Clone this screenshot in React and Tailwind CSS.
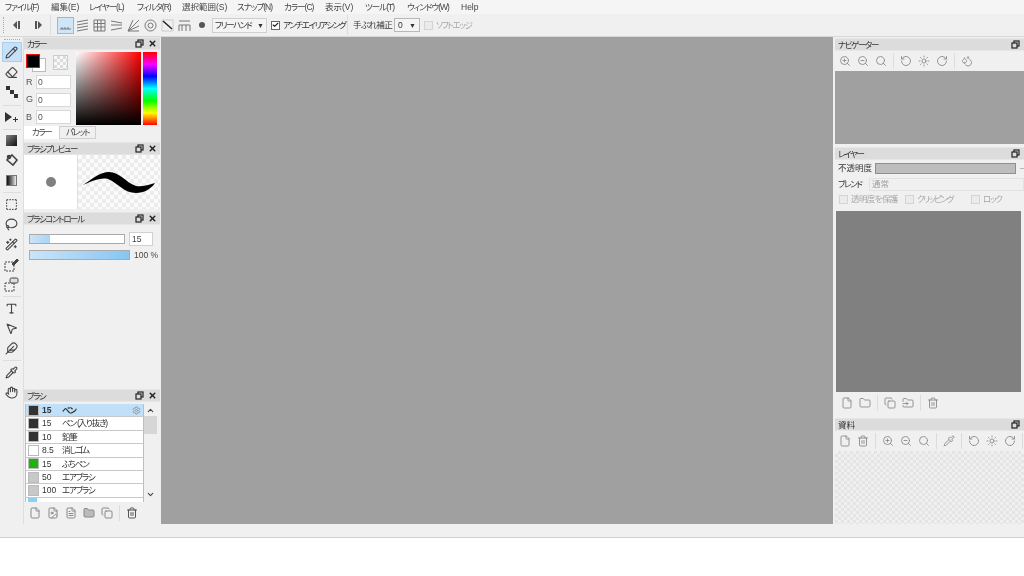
import { Pencil, Eraser, MousePointer2, Lasso, Wand2, Pipette, Hand, ZoomIn, ZoomOut, Search, RotateCcw, RotateCw, Trash2, File, Folder, Copy, Sun, Droplets, FileImage, FileText, FolderInput, Settings, ChevronUp, ChevronDown, Feather, SquareDashed, Check, X, Type } from 'lucide-react';

const kana = 'tracking-[-1.4px]';

const menus = [
  { label: 'ファイル(F)', w: 'w-[46px] tracking-[-1px]' },
  { label: '編集(E)', w: 'w-[38px]' },
  { label: 'レイヤー(L)', w: 'w-[48px] tracking-[-1px]' },
  { label: 'フィルタ(R)', w: 'w-[45px] tracking-[-1px]' },
  { label: '選択範囲(S)', w: 'w-[55px]' },
  { label: 'スナップ(N)', w: 'w-[47px] tracking-[-1px]' },
  { label: 'カラー(C)', w: 'w-[41px] tracking-[-1px]' },
  { label: '表示(V)', w: 'w-[40px]' },
  { label: 'ツール(T)', w: 'w-[42px] tracking-[-1px]' },
  { label: 'ウィンドウ(W)', w: 'w-[54px] tracking-[-1px]' },
  { label: 'Help', w: 'w-[30px]' },
];

const brushes = [
  { color: 'bg-[#333333]', size: '15', name: 'ペン', active: true },
  { color: 'bg-[#333333]', size: '15', name: 'ペン (入り抜き)' },
  { color: 'bg-[#333333]', size: '10', name: '鉛筆' },
  { color: 'bg-white', size: '8.5', name: '消しゴム' },
  { color: 'bg-[#1db30f]', size: '15', name: 'ふちペン' },
  { color: 'bg-[#c8c8c8]', size: '50', name: 'エアブラシ' },
  { color: 'bg-[#c8c8c8]', size: '100', name: 'エアブラシ' },
];

const Sep = () => <div className="w-px h-4 bg-[#dcdcdc] shrink-0" />;

function PanelHeader({ title, closable = true, plain }) {
  return (
    <div className="h-[13px] shrink-0 bg-[#dcdcdc] border-y border-[#e6e6e6] flex items-center pl-[3px] leading-none text-[#333]">
      <span className={`flex-1 pt-[1px] ${plain ? '' : kana}`}>{title}</span>
      <svg width="9" height="9" viewBox="0 0 9 9" className="mr-[4px] shrink-0" fill="none" stroke="#222" strokeWidth="1.2">
        <rect x="3" y="1" width="5" height="5" />
        <rect x="1" y="3" width="5" height="5" fill="#dcdcdc" />
      </svg>
      {closable && <X size={9} strokeWidth={4} className="mr-[3px] shrink-0 text-[#222]" />}
    </div>
  );
}

function Tool({ icon: Icon, active, fill }) {
  return (
    <div className={`w-[20px] h-[20px] flex items-center justify-center shrink-0 ${active ? 'bg-[#c5e0f7] border border-[#a9cfee]' : ''}`}>
      <Icon size={13} strokeWidth={2} className="text-[#444]" fill={fill || 'none'} />
    </div>
  );
}

const RailSep = ({ cls = 'my-[1.5px]' }) => <div className={`w-[18px] h-px bg-[#dddddd] shrink-0 ${cls}`} />;

// small square tool glyphs that have no icon in lucide
const Square = ({ cls }) => <div className={`w-[11px] h-[11px] ${cls}`} />;
const GradBox = () => <Square cls="bg-gradient-to-br from-[#888] to-[#111]" />;
const SideGrad = () => <Square cls="bg-gradient-to-r from-[#111] to-[#eee] border border-[#777]" />;
const Nodes = () => (
  <svg width="14" height="14" viewBox="0 0 14 14" fill="#333">
    <rect x="1" y="1" width="4" height="4" /><rect x="5" y="5" width="4" height="4" /><rect x="9" y="9" width="4" height="4" />
  </svg>
);
const MovePlus = () => (
  <svg width="15" height="14" viewBox="0 0 15 14" fill="#333">
    <path d="M1 1l7 5-7 5z" /><path d="M9 8h2V6h1v2h2v1h-2v2h-1V9H9z" />
  </svg>
);
const Bucket = () => (
  <svg width="14" height="14" viewBox="0 0 14 14" fill="none" stroke="#444" strokeWidth="1.6">
    <path d="M7 2l5 5-4 5-6-5z" /><circle cx="4" cy="4" r="1.5" fill="#444" />
  </svg>
);
const Transform = () => (
  <svg width="15" height="15" viewBox="0 0 15 15" fill="none" stroke="#444">
    <rect x="1" y="5" width="9" height="9" strokeDasharray="2 1" /><path d="M8 7l5-5 1.5 1.5-5 5z" fill="#444" />
  </svg>
);
const Transform2 = () => (
  <svg width="15" height="15" viewBox="0 0 15 15" fill="none" stroke="#444">
    <rect x="1" y="6" width="9" height="8" strokeDasharray="2 1" /><rect x="6" y="1" width="8" height="5" rx="1.5" fill="#ddd" />
  </svg>
);

function Ruler({ children, active }) {
  return (
    <div className={`w-[17px] h-[17px] shrink-0 flex items-center justify-center ${active ? 'bg-[#cfe6f9] border border-[#8dbde6]' : ''}`}>
      <svg width="13" height="13" viewBox="0 0 13 13" fill="none" stroke="#777" strokeWidth="1">{children}</svg>
    </div>
  );
}

function Check2({ on, label, cls = '', textCls = '' }) {
  return (
    <div className={`flex items-center gap-[3px] ${cls}`}>
      <div className={`w-[9px] h-[9px] border flex items-center justify-center shrink-0 ${on ? 'border-[#666] bg-white' : 'border-[#d4d4d4] bg-[#ebebeb]'}`}>
        {on && <Check size={8} strokeWidth={4} className="text-[#222]" />}
      </div>
      <span className={`whitespace-nowrap ${textCls} ${on ? 'text-[#333]' : 'text-[#a8a8a8]'}`}>{label}</span>
    </div>
  );
}

function Rgb({ label }) {
  return (
    <div className="flex items-center h-[14px] mb-[3.5px]">
      <span className="w-[10px] text-[9px] text-[#555]">{label}</span>
      <div className="w-[35px] h-[14px] bg-white border border-[#d8d8d8] pl-[1px] leading-[12px] text-[#555]">0</div>
    </div>
  );
}

function Row({ items }) {
  return (
    <div className="flex items-center gap-[6px] text-[#8a8a8a]">
      {items.map((It, i) => (It === '|' ? <Sep key={i} /> : <It key={i} size={12} strokeWidth={1.8} className="shrink-0" />))}
    </div>
  );
}

export default function App() {
  return (
    <div className="w-[1024px] h-[576px] bg-white overflow-hidden flex flex-col blur-[0.5px] [font-family:'Liberation_Sans','Noto_Sans_CJK_JP',sans-serif] [font-feature-settings:'palt'] text-[8.5px] leading-none">
      <div className="h-[14px] bg-[#f5f5f5] flex items-center pl-[5px] pt-[1px] text-[#444] shrink-0">
        {menus.map((m) => <span key={m.label} className={`${m.w} shrink-0 whitespace-nowrap`}>{m.label}</span>)}
      </div>

      <div className="h-[23px] bg-[#f0f0f0] border-b border-[#d8d8d8] flex items-center shrink-0 text-[#333]">
        <div className="w-px h-4 ml-[3px] border-l border-dotted border-[#aaa]" />
        <div className="flex gap-[13px] ml-[9px] text-[#555]">
          <svg width="8" height="8" viewBox="0 0 8 8" fill="currentColor"><path d="M4 0v8L0 4zM5 0h2v8H5z" /></svg>
          <svg width="8" height="8" viewBox="0 0 8 8" fill="currentColor"><path d="M1 0h2v8H1zM4 0l4 4-4 4z" /></svg>
        </div>
        <div className="w-px h-5 bg-[#dcdcdc] ml-[8px]" />
        <div className="flex items-center ml-[6px]">
          <Ruler active><path d="M1 10l11 0M3 10v-2M6 10v-2M9 10v-2" /></Ruler>
          <Ruler><path d="M1 3l11-2M1 6l11-2M1 9l11-2M1 12l11-2" /></Ruler>
          <Ruler><path d="M1 1h11v11H1zM1 4.5h11M1 8h11M4.5 1v11M8 1v11" /></Ruler>
          <Ruler><path d="M1 2l11 2M1 6h11M1 11l11-2" /></Ruler>
          <Ruler><path d="M1 12L12 1M1 12l11-5M1 12L6 1M1 12h11" /></Ruler>
          <Ruler><circle cx="6.5" cy="6.5" r="5.5" /><circle cx="6.5" cy="6.5" r="2.5" /></Ruler>
          <Ruler><path d="M1 1h11v11H1z" stroke="#ccc" /><path d="M2 2l9 8" stroke="#222" strokeWidth="1.5" /></Ruler>
          <Ruler><path d="M1 2h11M1 6h11M1 6v6M4 6v6M8 6v6M12 6v6" /></Ruler>
        </div>
        <div className="w-[6px] h-[6px] rounded-full bg-[#555] ml-[6px]" />
        <div className="w-[55px] h-[15px] ml-[7px] bg-[#f4f4f4] border border-[#cfcfcf] flex items-center px-[2px] shrink-0">
          <span className={`flex-1 whitespace-nowrap ${kana}`}>フリーハンド</span>
          <span className="text-[7px]">▼</span>
        </div>
        <Check2 on label="アンチエイリアシング" cls="ml-[4px] w-[72px]" textCls={kana} />
        <div className="w-px h-5 bg-[#dcdcdc] ml-[4px]" />
        <span className="ml-[5px] w-[38px] whitespace-nowrap tracking-[-0.6px]">手ぶれ補正</span>
        <div className="w-[26px] h-[14px] ml-[3px] bg-[#f4f4f4] border border-[#b8b8b8] flex items-center px-[3px] shrink-0">
          <span className="flex-1">0</span>
          <span className="text-[7px]">▼</span>
        </div>
        <Check2 label="ソフトエッジ" cls="ml-[4px]" textCls={kana} />
      </div>

      <div className="h-[487px] flex shrink-0 bg-[#f0f0f0]">
        <div className="w-[24px] shrink-0 flex flex-col items-center pt-[2px] border-r border-[#dedede]">
          <div className="w-[16px] h-px mb-[2px] border-t border-dotted border-[#aaa] shrink-0" />
          <Tool icon={Pencil} active />
          <Tool icon={Eraser} />
          <Tool icon={Nodes} />
          <RailSep cls="my-[2.5px]" />
          <Tool icon={MovePlus} />
          <RailSep cls="my-[0.5px]" />
          <Tool icon={GradBox} />
          <Tool icon={Bucket} />
          <Tool icon={SideGrad} />
          <RailSep />
          <Tool icon={SquareDashed} />
          <Tool icon={Lasso} />
          <Tool icon={Wand2} />
          <Tool icon={Transform} />
          <Tool icon={Transform2} />
          <RailSep />
          <Tool icon={Type} />
          <Tool icon={MousePointer2} />
          <Tool icon={Feather} />
          <RailSep />
          <Tool icon={Pipette} />
          <Tool icon={Hand} />
        </div>

        <div className="w-[136px] shrink-0 flex flex-col mr-[1px]">
          <PanelHeader title="カラー" />
          <div className="h-[76px] flex pl-[2px] pt-[2px] shrink-0">
            <div className="w-[50px]">
              <div className="relative h-[21px]">
                <div className="absolute left-[6px] top-[6px] w-[14px] h-[14px] bg-white border border-[#bbb]" />
                <div className="absolute left-0 top-[2px] w-[14px] h-[14px] bg-black border border-[#f01010]" />
                <div className="absolute left-[27px] top-[3px] w-[15px] h-[15px] border border-[#ccc] bg-[conic-gradient(#dcdcdc_25%,#f8f8f8_0_50%,#dcdcdc_0_75%,#f8f8f8_0)] bg-[length:6px_6px]" />
              </div>
              <div className="mt-[2px]">
                <Rgb label="R" />
                <Rgb label="G" />
                <Rgb label="B" />
              </div>
            </div>
            <div className="w-[65px] h-[73px] bg-[linear-gradient(to_bottom,transparent,#000),linear-gradient(to_right,#fff,#f00)]" />
            <div className="w-[14px] h-[73px] ml-[2px] bg-[linear-gradient(to_bottom,#f00,#f0f,#00f,#0ff,#0f0,#ff0,#f00)]" />
          </div>
          <div className="flex h-[13px] shrink-0">
            <div className={`w-[35px] bg-white flex items-center justify-center text-[#444] ${kana}`}>カラー</div>
            <div className={`w-[37px] bg-[#f0f0f0] border border-[#cfcfcf] flex items-center justify-center text-[#444] whitespace-nowrap ${kana}`}>パレット</div>
          </div>
          <div className="h-[3px] shrink-0" />

          <PanelHeader title="ブラシプレビュー" />
          <div className="h-[54px] flex shrink-0">
            <div className="w-[53px] bg-white flex items-center justify-center">
              <div className="w-[10px] h-[10px] rounded-full bg-[#808080]" />
            </div>
            <div className="w-px bg-[#e0e0e0]" />
            <div className="flex-1 flex items-center justify-center bg-[conic-gradient(#ececec_25%,#fbfbfb_0_50%,#ececec_0_75%,#fbfbfb_0)] bg-[length:8px_8px]">
              <svg width="74" height="23" viewBox="0 0 74 23">
                <path d="M1 14C10 8 18 1 27 1c11 0 16 10 27 14 6 1 12-1 19-3-4 6-11 10-19 10C42 22 36 12 26 8 18 6 8 11 1 14z" fill="#000" />
              </svg>
            </div>
          </div>
          <div className="h-[3px] shrink-0" />

          <PanelHeader title="ブラシコントロール" />
          <div className="h-[164px] shrink-0 px-[5px] pt-[7px]">
            <div className="flex items-center h-[14px]">
              <div className="w-[96px] h-[10px] border border-[#aaa] bg-white shrink-0">
                <div className="w-[20px] h-full bg-gradient-to-r from-[#cbe4f6] to-[#a8d4f4]" />
              </div>
              <div className="w-[24px] h-[14px] ml-[4px] bg-white border border-[#d0d0d0] pl-[2px] leading-[12px] text-[#444] shrink-0">15</div>
            </div>
            <div className="flex items-center h-[12px] mt-[3px]">
              <div className="w-[101px] h-[10px] border border-[#aaa] bg-gradient-to-r from-[#cbe4f6] to-[#86c5f5] shrink-0" />
              <span className="ml-[4px] text-[#444] whitespace-nowrap">100 %</span>
            </div>
          </div>

          <PanelHeader title="ブラシ" />
          <div className="flex pl-[1px] pt-[2px] shrink-0">
            <div className="w-[119px] h-[98px] overflow-hidden border-x border-[#bdbdbd]">
              {brushes.map((b) => (
                <div key={b.name + b.size} className={`h-[13.4px] flex items-center border-b border-[#c8c8c8] ${b.active ? 'bg-[#bfe0f8] font-bold' : 'bg-white'}`}>
                  <div className={`w-[9px] h-[9px] ml-[1.5px] box-content border border-[#bbb] ${b.color}`} />
                  <span className="w-[20px] ml-[3.5px] text-[#333]">{b.size}</span>
                  <span className="flex-1 text-[#333] tracking-[-1.2px]">{b.name}</span>
                  {b.active && <Settings size={9} className="mr-[2px] text-[#888]" />}
                </div>
              ))}
              <div className="h-[6px] flex bg-white">
                <div className="w-[9px] ml-[1.5px] bg-[#8fd0f0]" />
              </div>
            </div>
            <div className="w-[13px] h-[98px] flex flex-col items-center text-[#444]">
              <ChevronUp size={9} strokeWidth={3} className="mt-[2px]" />
              <div className="w-[13px] h-[18px] bg-[#d6d6d6] mt-[1px]" />
              <div className="flex-1" />
              <ChevronDown size={9} strokeWidth={3} className="mb-[3px]" />
            </div>
          </div>
          <div className="flex items-center gap-[6px] pl-[5px] mt-[3px] text-[#888] shrink-0">
            <File size={12} /><FileImage size={12} /><FileText size={12} /><Folder size={12} fill="#bbb" /><Copy size={12} /><Sep /><Trash2 size={12} className="text-[#555]" />
          </div>
        </div>

        <div className="w-[672px] shrink-0 bg-[#a0a0a0]" />

        <div className="flex-1 min-w-0 ml-[2px] pt-[1px] flex flex-col overflow-hidden">
          <PanelHeader title="ナビゲーター" closable={false} />
          <div className="h-[20px] flex items-center pl-[4px] shrink-0">
            <Row items={[ZoomIn, ZoomOut, Search, '|', RotateCcw, Sun, RotateCw, '|', Droplets]} />
          </div>
          <div className="h-[73px] bg-[#a0a0a0] shrink-0" />
          <div className="h-[3px] shrink-0" />

          <PanelHeader title="レイヤー" closable={false} />
          <div className="flex items-center h-[17px] pl-[3px] shrink-0 text-[#333]">
            <span className="w-[37px] shrink-0 whitespace-nowrap">不透明度</span>
            <div className="w-[141px] h-[11px] bg-[#bdbdbd] border border-[#8f8f8f] shrink-0" />
            <span className="ml-[4px] text-[#999]">–</span>
          </div>
          <div className="flex items-center h-[14px] pl-[3px] shrink-0">
            <span className={`w-[31px] shrink-0 whitespace-nowrap text-[#333] ${kana}`}>ブレンド</span>
            <div className="flex-1 h-[13px] border border-[#e2e2e2] pl-[2px] leading-[11px] text-[#a0a0a0]">通常</div>
          </div>
          <div className="flex items-center h-[17px] pl-[4px] shrink-0">
            <Check2 label="透明度を保護" cls="w-[66px] shrink-0" textCls="tracking-[-0.6px]" />
            <Check2 label="クリッピング" cls="w-[66px] shrink-0" textCls={kana} />
            <Check2 label="ロック" textCls={kana} />
          </div>
          <div className="h-[181px] w-[185px] ml-[1px] mt-[3px] bg-[#808080] shrink-0" />
          <div className="h-[22px] flex items-center pl-[6px] shrink-0">
            <Row items={[File, Folder, '|', Copy, FolderInput, '|', Trash2]} />
          </div>
          <div className="h-[4px] shrink-0" />

          <PanelHeader title="資料" closable={false} plain />
          <div className="h-[20px] flex items-center pl-[4px] shrink-0">
            <Row items={[File, Trash2, '|', ZoomIn, ZoomOut, Search, '|', Pipette, '|', RotateCcw, Sun, RotateCw, '|', Droplets]} />
          </div>
          <div className="flex-1 bg-[conic-gradient(#e4e4e4_25%,#f0f0f0_0_50%,#e4e4e4_0_75%,#f0f0f0_0)] bg-[length:6px_6px]" />
        </div>
      </div>

      <div className="h-[14px] bg-[#f0f0f0] border-b border-[#c9d3df] shrink-0" />
    </div>
  );
}
